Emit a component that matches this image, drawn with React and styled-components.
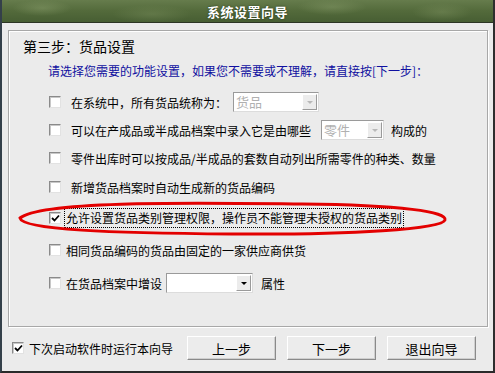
import React from "react";
import styled, { createGlobalStyle } from "styled-components";

const Global = createGlobalStyle`
  html, body { margin: 0; padding: 0; background: #ebebeb; }
  body { font-family: "Noto Sans CJK SC", "Noto Sans", sans-serif; }
`;

const Window = styled.div`
  position: relative;
  width: 495px;
  height: 373px;
  box-sizing: border-box;
  background: #ebebeb;
  border-left: 2px solid #34404a;
  border-right: 2px solid #2e2e2e;
  border-bottom: 2px solid #2a2a2a;
  display: flex;
  flex-direction: column;
  font-size: 12px;
  color: #000;
`;

const TitleBar = styled.div`
  height: 22px;
  flex: none;
  border-bottom: 1px solid #2c3524;
  background:
    radial-gradient(ellipse 30px 8px at 40px 8px, rgba(140,160,110,0.45), transparent),
    radial-gradient(ellipse 40px 9px at 150px 14px, rgba(130,150,100,0.35), transparent),
    radial-gradient(ellipse 35px 8px at 330px 7px, rgba(140,160,110,0.4), transparent),
    radial-gradient(ellipse 30px 9px at 440px 12px, rgba(130,150,100,0.4), transparent),
    linear-gradient(180deg, #667c4c 0%, #536a3b 50%, #475e33 100%);
  display: flex;
  align-items: center;
  justify-content: center;
  color: #fff;
  font-weight: bold;
  font-size: 13px;
  letter-spacing: 0.5px;
  text-shadow: 0 0 2px #223015;
`;

const GroupBox = styled.div`
  margin: 7px 5px 0 6px;
  height: 297px;
  box-sizing: border-box;
  border: 1px solid #a8a8a8;
  box-shadow: inset 1px 1px 0 #fff, 1px 1px 0 #fff;
  display: flex;
  flex-direction: column;
`;

const Heading = styled.div`
  margin: 6px 0 0 14px;
  font-size: 14px;
  line-height: 18px;
`;

const Hint = styled.div`
  margin: 8px 0 0 39px;
  line-height: 16px;
  color: #1010a0;
`;

const Rows = styled.div`
  margin-top: 9px;
  display: flex;
  flex-direction: column;
`;

const Row = styled.div`
  height: ${(p) => p.$h}px;
  display: flex;
  align-items: center;
  padding-left: 40px;
  gap: ${(p) => p.$gap}px;
  white-space: nowrap;
`;

const Label = styled.span`
  padding: 1px 1px;
  outline: ${(p) => (p.$focus ? "1px dotted #000" : "none")};
  line-height: 16px;
`;

const Box = styled.span`
  width: 12px;
  height: 12px;
  flex: none;
  box-sizing: border-box;
  background: #fff;
  border-top: 1px solid #8a8a8a;
  border-left: 1px solid #8a8a8a;
  border-bottom: 1px solid #e2e2e2;
  border-right: 1px solid #e2e2e2;
  box-shadow: inset 1px 1px 0 #c8c8c8;
  display: flex;
  align-items: center;
  justify-content: center;
`;

const Check = ({ on }) => (
  <Box>
    {on && (
      <svg width="9" height="9" viewBox="0 0 9 9">
        <path d="M1 4 L3.5 6.5 L8 1.5" fill="none" stroke="#000" strokeWidth="1.8" />
      </svg>
    )}
  </Box>
);

const ComboWrap = styled.span`
  width: ${(p) => p.$w}px;
  height: 20px;
  flex: none;
  box-sizing: border-box;
  display: flex;
  background: #fff;
  border-top: 1px solid #9a9a9a;
  border-left: 1px solid #9a9a9a;
  border-bottom: 1px solid #dcdcdc;
  border-right: 1px solid #dcdcdc;
  margin-left: ${(p) => p.$ml || 0}px;
  margin-right: ${(p) => p.$mr || 0}px;
`;

const ComboText = styled.span`
  flex: 1;
  padding-left: 2px;
  line-height: 18px;
  font-size: 13px;
  color: ${(p) => (p.$disabled ? "#b0b0b0" : "#000")};
`;

const DropBtn = styled.span`
  width: 15px;
  flex: none;
  margin: 1px;
  background: #ececec;
  border-top: 1px solid #fff;
  border-left: 1px solid #fff;
  border-right: 1px solid #9a9a9a;
  border-bottom: 1px solid #9a9a9a;
  box-sizing: border-box;
  display: flex;
  align-items: center;
  justify-content: center;
`;

const Arrow = styled.span`
  width: 0;
  height: 0;
  border-left: 3px solid transparent;
  border-right: 3px solid transparent;
  border-top: 3px solid ${(p) => (p.$disabled ? "#b8b8b8" : "#000")};
`;

const Combo = ({ w, text, disabled, ml, mr }) => (
  <ComboWrap $w={w} $ml={ml} $mr={mr}>
    <ComboText $disabled={disabled}>{text}</ComboText>
    <DropBtn>
      <Arrow $disabled={disabled} />
    </DropBtn>
  </ComboWrap>
);

const Footer = styled.div`
  flex: 1;
  display: flex;
  align-items: flex-start;
  justify-content: space-between;
  padding: 9px 17px 0 10px;
`;

const FooterCheck = styled.label`
  display: flex;
  align-items: center;
  gap: 5px;
  height: 24px;
  font-size: 12px;
`;

const Buttons = styled.div`
  display: flex;
  gap: 11px;
`;

const Button = styled.button`
  width: 89px;
  height: 24px;
  background: #ececec;
  font-family: inherit;
  font-size: 13px;
  color: #000;
  border-top: 1px solid #fff;
  border-left: 1px solid #fff;
  border-right: 1px solid #8a8a8a;
  border-bottom: 1px solid #8a8a8a;
  box-shadow: inset -1px -1px 0 #cfcfcf;
  padding: 0;
`;

const Annotation = styled.svg`
  position: absolute;
  left: 0;
  top: 0;
  pointer-events: none;
`;

export default function App() {
  return (
    <>
      <Global />
      <Window>
        <TitleBar>系统设置向导</TitleBar>
        <GroupBox>
          <Heading>第三步：货品设置</Heading>
          <Hint>请选择您需要的功能设置，如果您不需要或不理解，请直接按[下一步]：</Hint>
          <Rows>
            <Row $h={28} $gap={10}>
              <Check />
              <span>在系统中，所有货品统称为：</span>
              <Combo w={86} text="货品" disabled ml={-4} />
            </Row>
            <Row $h={28} $gap={10}>
              <Check />
              <span>可以在产成品或半成品档案中录入它是由哪些</span>
              <Combo w={63} text="零件" disabled ml={0} mr={-3} />
              <span>构成的</span>
            </Row>
            <Row $h={28} $gap={10}>
              <Check />
              <span>零件出库时可以按成品/半成品的套数自动列出所需零件的种类、数量</span>
            </Row>
            <Row $h={30} $gap={10}>
              <Check />
              <span>新增货品档案时自动生成新的货品编码</span>
            </Row>
            <Row $h={32} $gap={4}>
              <Check on />
              <Label $focus>允许设置货品类别管理权限，操作员不能管理未授权的货品类别</Label>
            </Row>
            <Row $h={32} $gap={5}>
              <Check />
              <span>相同货品编码的货品由固定的一家供应商供货</span>
            </Row>
            <Row $h={34} $gap={5}>
              <Check />
              <span>在货品档案中增设</span>
              <Combo w={87} text="" ml={-1} mr={3} />
              <span>属性</span>
            </Row>
          </Rows>
        </GroupBox>
        <Footer>
          <FooterCheck>
            <Check on />
            下次启动软件时运行本向导
          </FooterCheck>
          <Buttons>
            <Button>上一步</Button>
            <Button>下一步</Button>
            <Button>退出向导</Button>
          </Buttons>
        </Footer>
        <Annotation width="495" height="373" viewBox="0 0 495 373">
          <path
            d="M18 218 C 40 200, 200 203, 300 204 C 400 205, 446 212, 443 220 C 440 229, 350 235, 230 234 C 110 233, 20 230, 18 218 Z"
            fill="none"
            stroke="#e30000"
            strokeWidth="3"
          />
        </Annotation>
      </Window>
    </>
  );
}
